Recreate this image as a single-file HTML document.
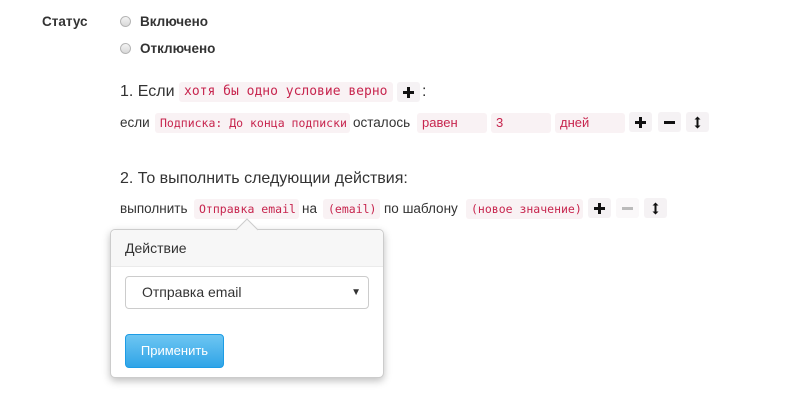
<!DOCTYPE html><html><head><meta charset="utf-8"><style>
body{margin:0;width:802px;height:420px;background:#fff;font-family:"Liberation Sans",sans-serif;color:#333;position:relative;overflow:hidden}
.a{position:absolute;white-space:nowrap}
.c{position:absolute;background:#f9f2f4;color:#c7254e;font-family:"DejaVu Sans Mono","Liberation Mono",monospace;font-size:11.5px;height:20px;line-height:20px;padding-left:5px;border-radius:3px;box-sizing:border-box;white-space:nowrap}
.s{font-family:"Liberation Sans",sans-serif;font-size:13px}
.b{position:absolute;background:#f5f2f4;height:20px;width:23px;border-radius:3px}
.b svg{position:absolute;left:5px;top:4px}
.r{position:absolute;width:11px;height:11px;border-radius:50%;border:1px solid #b5b5b5;background:linear-gradient(#f4f4f4,#d8d8d8);box-sizing:border-box}
</style></head><body>
<div class="a" style="left:42px;top:14px;font-size:13.5px;font-weight:bold">Статус</div>
<div class="r" style="left:120px;top:16px"></div>
<div class="a" style="left:140px;top:14px;font-size:13.5px;font-weight:bold">Включено</div>
<div class="r" style="left:120px;top:43px"></div>
<div class="a" style="left:140px;top:41px;font-size:13.5px;font-weight:bold">Отключено</div>

<div class="a" style="left:120px;top:83px;font-size:16px">1. Если</div>
<div class="c" style="left:179px;top:82px;width:214px;font-size:13px">хотя бы одно условие верно</div>
<div class="b" style="left:397px;top:82px"><svg width="13" height="13"><path d="M6.5 1V12M1 6.5H12" stroke="#111" stroke-width="3"/></svg></div>
<div class="a" style="left:422px;top:83px;font-size:16px">:</div>

<div class="a" style="left:120px;top:115px;font-size:13.5px">если</div>
<div class="c" style="left:155px;top:113px;width:195px">Подписка: До конца подписки</div>
<div class="a" style="left:353px;top:115px;font-size:13.5px">осталось</div>
<div class="c s" style="left:417px;top:113px;width:70px">равен</div>
<div class="c s" style="left:491px;top:113px;width:60px">3</div>
<div class="c s" style="left:555px;top:113px;width:70px">дней</div>
<div class="b" style="left:629px;top:112px"><svg width="13" height="13"><path d="M6.5 1V12M1 6.5H12" stroke="#111" stroke-width="3"/></svg></div>
<div class="b" style="left:658px;top:112px"><svg width="13" height="13"><path d="M1 6.5H12" stroke="#111" stroke-width="3"/></svg></div>
<div class="b" style="left:686px;top:112px"><svg width="13" height="13"><path d="M6.5 2V11" stroke="#111" stroke-width="2"/><path d="M3.5 3.5L6.5 0.5L9.5 3.5ZM3.5 9.5L6.5 12.5L9.5 9.5Z" fill="#111"/></svg></div>

<div class="a" style="left:120px;top:170px;font-size:16px">2. То выполнить следующии действия:</div>

<div class="a" style="left:120px;top:201px;font-size:13.5px">выполнить</div>
<div class="c" style="left:194px;top:199px;width:105px">Отправка email</div>
<div class="a" style="left:302px;top:201px;font-size:13.5px">на</div>
<div class="c" style="left:323px;top:199px;width:57px">(email)</div>
<div class="a" style="left:384px;top:201px;font-size:13.5px">по шаблону</div>
<div class="c" style="left:466px;top:199px;width:117px">(новое значение)</div>
<div class="b" style="left:588px;top:198px"><svg width="13" height="13"><path d="M6.5 1V12M1 6.5H12" stroke="#111" stroke-width="3"/></svg></div>
<div class="b" style="left:616px;top:198px;background:#faf8f9"><svg width="13" height="13"><path d="M1 6.5H12" stroke="#bbb" stroke-width="3"/></svg></div>
<div class="b" style="left:644px;top:198px"><svg width="13" height="13"><path d="M6.5 2V11" stroke="#111" stroke-width="2"/><path d="M3.5 3.5L6.5 0.5L9.5 3.5ZM3.5 9.5L6.5 12.5L9.5 9.5Z" fill="#111"/></svg></div>

<div style="position:absolute;left:110px;top:229px;width:274px;height:149px;border:1px solid #ccc;border-radius:5px;box-sizing:border-box;box-shadow:0 3px 8px rgba(0,0,0,.25);background:#fff">
<div style="height:36px;background:#f7f7f7;border-bottom:1px solid #ebebeb;border-radius:5px 5px 0 0;font-size:14px;line-height:36px;padding-left:14px">Действие</div>
<div style="position:absolute;left:14px;top:46px;width:244px;height:33px;border:1px solid #ccc;border-radius:4px;box-sizing:border-box;font-size:14px;line-height:31px;padding-left:16px">Отправка email<span style="position:absolute;right:7px;font-size:10px">▼</span></div>
<div style="position:absolute;left:14px;top:104px;width:99px;height:34px;border:1px solid #1d9ce5;border-radius:4px;box-sizing:border-box;background:linear-gradient(#6ec6f2,#2fa4e7);color:#fff;font-size:13px;line-height:32px;text-align:center">Применить</div>
</div>
<svg style="position:absolute;left:236px;top:218px" width="22" height="13"><path d="M0 12 L11 1 L22 12" fill="#f7f7f7" stroke="#ccc"/></svg>
</body></html>
